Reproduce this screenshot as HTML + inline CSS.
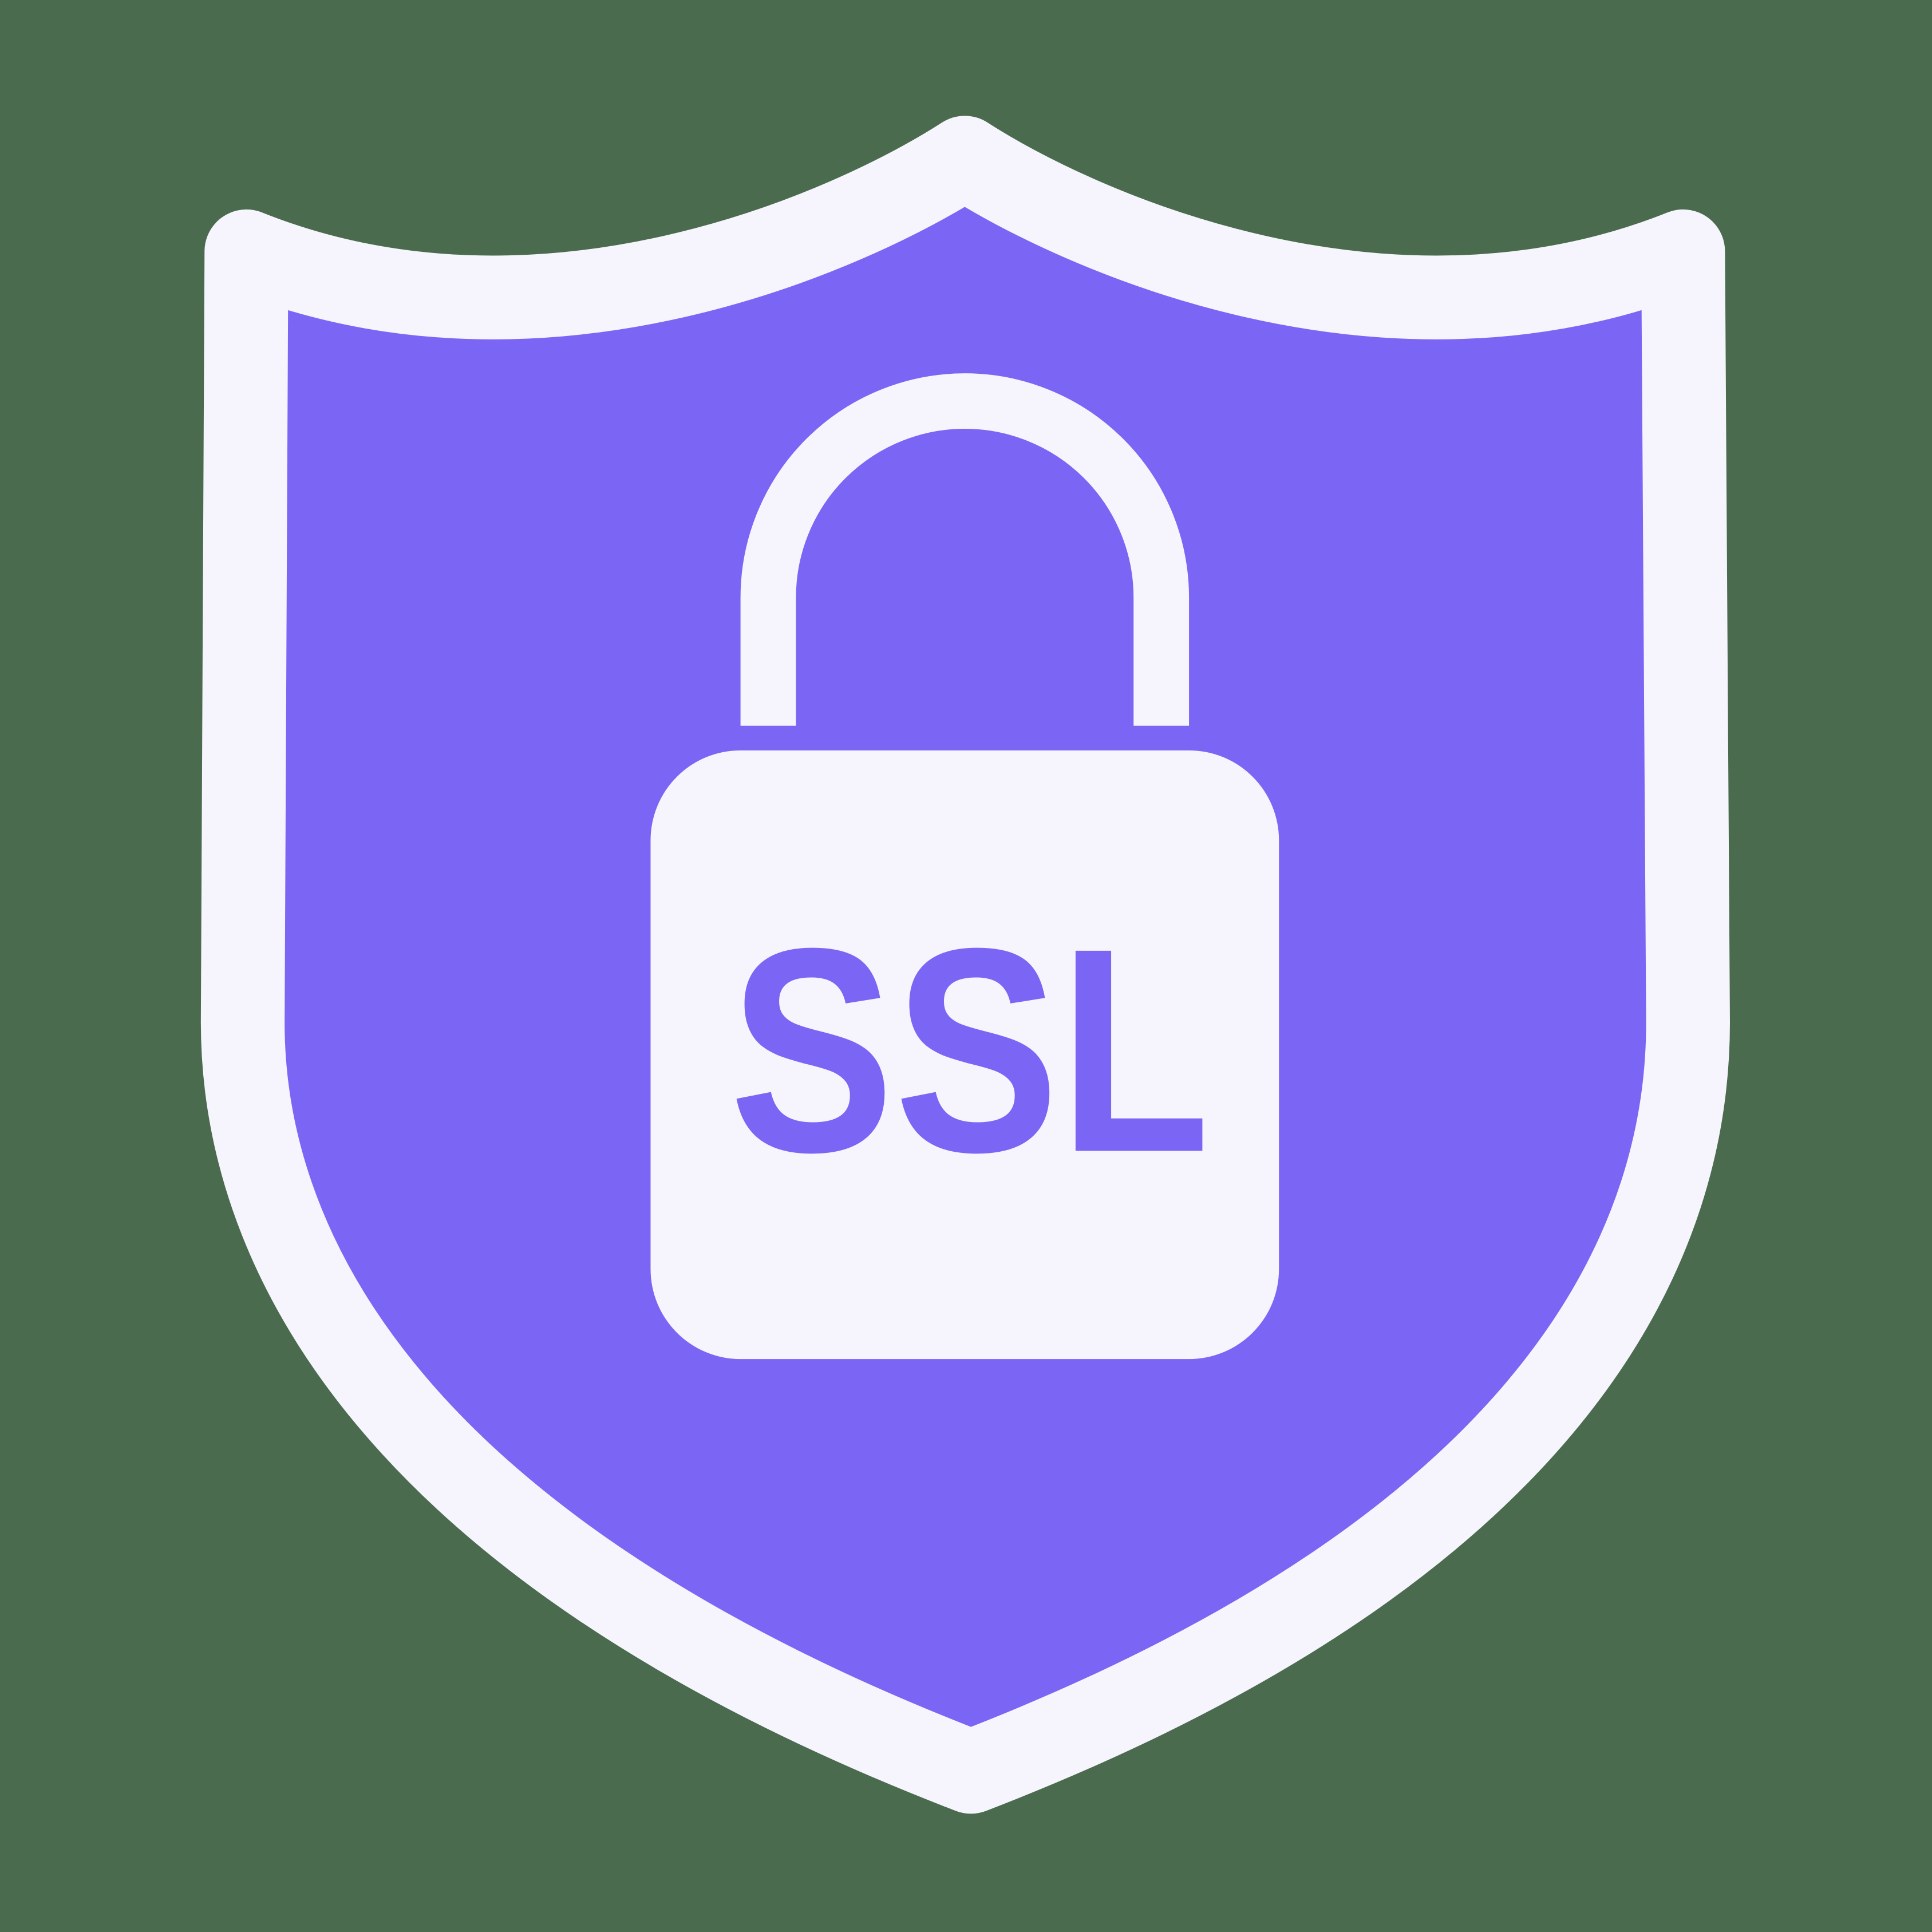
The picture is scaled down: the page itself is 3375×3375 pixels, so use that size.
<!DOCTYPE html>
<html><head><meta charset="utf-8"><style>
html,body{margin:0;padding:0;background:#4b6b4e;}
svg{display:block;}
</style></head><body>
<svg width="3375" height="3375" viewBox="0 0 1568 1568" xmlns="http://www.w3.org/2000/svg">
<rect width="1568" height="1568" fill="#4b6b4e"/>
<path d="M783,128 C690,188 440,300 200,204 L197,830 C197,1000 300,1250 788,1438 C1276,1250 1370,1000 1370,830 L1366,204 C1126,300 876,188 783,128 Z" fill="#7b65f5" stroke="#f6f4fd" stroke-width="68" stroke-linejoin="round"/>
<path d="M623.5,589 L623.5,485 A159.5,159.5 0 0 1 942.5,485 L942.5,589" fill="none" stroke="#f6f4fd" stroke-width="45"/>
<rect x="528" y="609" width="510" height="494" rx="73" fill="#f6f4fd"/>
<text x="592" y="934" font-family="'Liberation Sans',sans-serif" font-weight="bold" font-size="236" fill="#7b65f5" textLength="390" lengthAdjust="spacingAndGlyphs">SSL</text>
</svg>
</body></html>
